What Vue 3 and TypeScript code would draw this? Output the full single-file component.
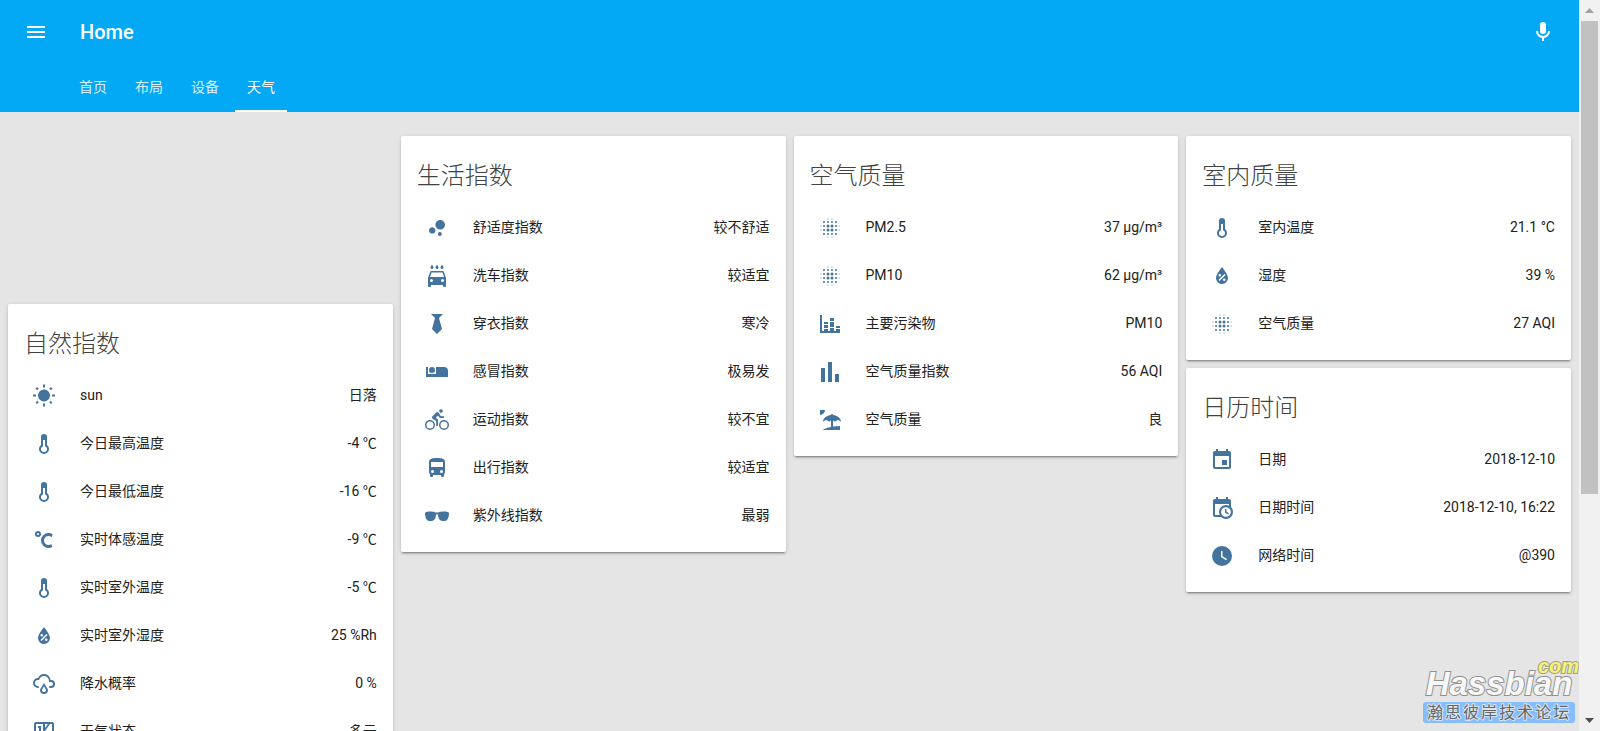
<script setup lang="ts">
import { ref } from 'vue'

interface Entity {
  icon: string
  name: string
  state: string
}

interface Card {
  title: string
  rows: Entity[]
}

const dot = (x: number, y: number, r: number): string =>
  `M${x - r},${y}a${r},${r} 0 1,0 ${2 * r},0a${r},${r} 0 1,0 ${-2 * r},0Z`

const blurPath = (): string => {
  const parts: string[] = []
  for (const x of [6, 10, 14, 18]) {
    for (const y of [6, 10, 14, 18]) {
      const inner = x > 6 && x < 18 && y > 6 && y < 18
      parts.push(dot(x, y, inner ? 1.5 : 1))
    }
  }
  for (const a of [3, 21]) {
    for (const b of [10, 14]) {
      parts.push(dot(a, b, 0.5), dot(b, a, 0.5))
    }
  }
  return parts.join('')
}

const icons: Record<string, string> = {
  sunny:
    'M3.55,18.54L4.96,19.95L6.76,18.16L5.34,16.74M11,22.45C11.32,22.45 13,22.45 13,22.45V19.5H11M12,5.5A6,6 0 0,0 6,11.5A6,6 0 0,0 12,17.5A6,6 0 0,0 18,11.5C18,8.18 15.31,5.5 12,5.5M20,12.5H23V10.5H20M17.24,18.16L19.04,19.95L20.45,18.54L18.66,16.74M20.45,4.46L19.04,3.05L17.24,4.84L18.66,6.26M13,0.55H11V3.5H13M4,10.5H1V12.5H4M6.76,4.84L4.96,3.05L3.55,4.46L5.34,6.26L6.76,4.84Z',
  thermometer:
    'M17,17A5,5 0 0,1 12,22A5,5 0 0,1 7,17C7,15.36 7.79,13.91 9,13V5A3,3 0 0,1 12,2A3,3 0 0,1 15,5V13C16.21,13.91 17,15.36 17,17M11,8V14.17C9.83,14.58 9,15.69 9,17A3,3 0 0,0 12,20A3,3 0 0,0 15,17C15,15.69 14.17,14.58 13,14.17V8H11Z',
  celsius:
    'M16.5,5C18.05,5 19.5,5.47 20.69,6.28L19.53,9.17C18.73,8.44 17.67,8 16.5,8C14,8 12,10 12,12.5C12,15 14,17 16.5,17C17.53,17 18.47,16.66 19.23,16.08L20.37,18.93C19.24,19.61 17.92,20 16.5,20A7.5,7.5 0 0,1 9,12.5A7.5,7.5 0 0,1 16.5,5M6,3A3,3 0 0,1 9,6A3,3 0 0,1 6,9A3,3 0 0,1 3,6A3,3 0 0,1 6,3M6,5A1,1 0 0,0 5,6A1,1 0 0,0 6,7A1,1 0 0,0 7,6A1,1 0 0,0 6,5Z',
  humidity:
    'M12,3.25C12,3.25 6,10 6,14C6,17.32 8.69,20 12,20A6,6 0 0,0 18,14C18,10 12,3.25 12,3.25M14.47,9.97L15.53,11.03L9.53,17.03L8.47,15.97M9.75,10A1.25,1.25 0 0,1 11,11.25A1.25,1.25 0 0,1 9.75,12.5A1.25,1.25 0 0,1 8.5,11.25A1.25,1.25 0 0,1 9.75,10M14.25,14.5A1.25,1.25 0 0,1 15.5,15.75A1.25,1.25 0 0,1 14.25,17A1.25,1.25 0 0,1 13,15.75A1.25,1.25 0 0,1 14.25,14.5Z',
  rainy:
    'M6,14A1,1 0 0,1 7,15A1,1 0 0,1 6,16A5,5 0 0,1 1,11A5,5 0 0,1 6,6C7,3.65 9.3,2 12,2C15.43,2 18.24,4.66 18.5,8.03L19,8A4,4 0 0,1 23,12A4,4 0 0,1 19,16H18A1,1 0 0,1 17,15A1,1 0 0,1 18,14H19A2,2 0 0,0 21,12A2,2 0 0,0 19,10H17V9A5,5 0 0,0 12,4C9.5,4 7.45,5.82 7.06,8.19C6.73,8.07 6.37,8 6,8A3,3 0 0,0 3,11A3,3 0 0,0 6,14M14.83,15.67C16.39,17.23 16.39,19.5 14.83,21.08C14.05,21.86 13,22 12,22C11,22 9.95,21.86 9.17,21.08C7.61,19.5 7.61,17.23 9.17,15.67L12,11L14.83,15.67M13.41,16.69L12,14.25L10.59,16.69C9.8,17.5 9.8,18.7 10.59,19.5C11,19.93 11.5,20 12,20C12.5,20 13,19.93 13.41,19.5C14.2,18.7 14.2,17.5 13.41,16.69Z',
  forecast:
    'M4,2H20A2,2 0 0,1 22,4V20A2,2 0 0,1 20,22H4A2,2 0 0,1 2,20V4A2,2 0 0,1 4,2M4,4V20H11V4H4M13,4V8L16,4H13M18,4L13,11V20H20V4H18M6,6H9V11H7V8H6V6Z',
  bubble:
    'M7.2,11.2C8.97,11.2 10.4,12.63 10.4,14.4C10.4,16.17 8.97,17.6 7.2,17.6C5.43,17.6 4,16.17 4,14.4C4,12.63 5.43,11.2 7.2,11.2M14.8,16A2,2 0 0,1 16.8,18A2,2 0 0,1 14.8,20A2,2 0 0,1 12.8,18A2,2 0 0,1 14.8,16M15.2,4A4.8,4.8 0 0,1 20,8.8C20,11.45 17.85,13.6 15.2,13.6A4.8,4.8 0 0,1 10.4,8.8C10.4,6.15 12.55,4 15.2,4Z',
  carWash:
    'M5,13L6.5,8.5H17.5L19,13M17.5,18A1.5,1.5 0 0,1 16,16.5A1.5,1.5 0 0,1 17.5,15A1.5,1.5 0 0,1 19,16.5A1.5,1.5 0 0,1 17.5,18M6.5,18A1.5,1.5 0 0,1 5,16.5A1.5,1.5 0 0,1 6.5,15A1.5,1.5 0 0,1 8,16.5A1.5,1.5 0 0,1 6.5,18M18.92,8C18.72,7.42 18.16,7 17.5,7H6.5C5.84,7 5.28,7.42 5.08,8L3,14V22A1,1 0 0,0 4,23H5A1,1 0 0,0 6,22V21H18V22A1,1 0 0,0 19,23H20A1,1 0 0,0 21,22V14M7,5C7.83,5 8.5,4.33 8.5,3.5C8.5,2.5 7,0.8 7,0.8C7,0.8 5.5,2.5 5.5,3.5C5.5,4.33 6.17,5 7,5M12,5C12.83,5 13.5,4.33 13.5,3.5C13.5,2.5 12,0.8 12,0.8C12,0.8 10.5,2.5 10.5,3.5C10.5,4.33 11.17,5 12,5M17,5C17.83,5 18.5,4.33 18.5,3.5C18.5,2.5 17,0.8 17,0.8C17,0.8 15.5,2.5 15.5,3.5C15.5,4.33 16.17,5 17,5Z',
  tie: 'M6,2L10,6L7,17L12,22L17,17L14,6L18,2Z',
  bed: 'M7,13A3,3 0 0,0 10,10A3,3 0 0,0 7,7A3,3 0 0,0 4,10A3,3 0 0,0 7,13M19,7H11V14H3V7H1V17H23V11A4,4 0 0,0 19,7Z',
  bike: 'M5,20.5A3.5,3.5 0 0,1 1.5,17A3.5,3.5 0 0,1 5,13.5A3.5,3.5 0 0,1 8.5,17A3.5,3.5 0 0,1 5,20.5M5,12A5,5 0 0,0 0,17A5,5 0 0,0 5,22A5,5 0 0,0 10,17A5,5 0 0,0 5,12M14.8,10H19V8.2H15.8L13.86,4.93C13.57,4.43 13,4.1 12.4,4.1C11.93,4.1 11.5,4.29 11.2,4.6L7.5,8.29C7.19,8.6 7,9 7,9.5C7,10.13 7.33,10.66 7.85,10.97L11.2,13V18H13V11.5L10.75,9.85L13.07,7.5M19,20.5A3.5,3.5 0 0,1 15.5,17A3.5,3.5 0 0,1 19,13.5A3.5,3.5 0 0,1 22.5,17A3.5,3.5 0 0,1 19,20.5M19,12A5,5 0 0,0 14,17A5,5 0 0,0 19,22A5,5 0 0,0 24,17A5,5 0 0,0 19,12M16,4.8C17,4.8 17.8,4 17.8,3C17.8,2 17,1.2 16,1.2C15,1.2 14.2,2 14.2,3C14.2,4 15,4.8 16,4.8Z',
  bus: 'M18,11H6V6H18M16.5,17A1.5,1.5 0 0,1 15,15.5A1.5,1.5 0 0,1 16.5,14A1.5,1.5 0 0,1 18,15.5A1.5,1.5 0 0,1 16.5,17M7.5,17A1.5,1.5 0 0,1 6,15.5A1.5,1.5 0 0,1 7.5,14A1.5,1.5 0 0,1 9,15.5A1.5,1.5 0 0,1 7.5,17M4,16C4,16.88 4.39,17.67 5,18.22V20A1,1 0 0,0 6,21H7A1,1 0 0,0 8,20V19H16V20A1,1 0 0,0 17,21H18A1,1 0 0,0 19,20V18.22C19.61,17.67 20,16.88 20,16V6C20,2.5 16.42,2 12,2C7.58,2 4,2.5 4,6V16Z',
  sunglasses:
    'M1.5,7.9C3.5,7.4 8,7.4 10,8.2C11.3,8.7 12.7,8.7 14,8.2C16,7.4 20.5,7.4 22.5,7.9C23.6,8.2 24,8.6 24,9.3C24,12 23.3,14.5 22,16C21,17.2 16.5,17.3 15,16C13.7,14.8 13.2,12.8 12.9,10.8C12.6,10.2 11.4,10.2 11.1,10.8C10.8,12.8 10.3,14.8 9,16C7.5,17.3 3,17.2 2,16C0.7,14.5 0,12 0,9.3C0,8.6 0.4,8.2 1.5,7.9Z',
  blur: blurPath(),
  stacked:
    'M22,21H2V3H4V19H6V17H10V19H12V16H16V19H18V17H22V21M18,14H22V16H18V14M12,6H16V9H12V6M16,15H12V10H16V15M6,10H10V12H6V10M10,16H6V13H10V16Z',
  poll: 'M3,22V8H7V22H3M10,22V2H14V22H10M17,22V14H21V22H17Z',
  beach:
    'M15,18.54C17.13,18.21 19.5,18 22,18V22H5C5,21.35 8.2,19.86 13,18.9V12.4C12.16,12.65 11.45,13.21 11,13.95C10.39,12.93 9.27,12.25 8,12.25C6.73,12.25 5.61,12.93 5,13.95C5.03,10.37 8.5,7.43 13,7.04V7A1,1 0 0,1 14,6A1,1 0 0,1 15,7V7.04C19.5,7.43 22.96,10.37 23,13.95C22.39,12.93 21.27,12.25 20,12.25C18.73,12.25 17.61,12.93 17,13.95C16.55,13.21 15.84,12.65 15,12.39V18.54M7,2A5,5 0 0,1 2,7V2H7Z',
  calendar:
    'M19,19H5V8H19M16,1V3H8V1H6V3H5C3.89,3 3,3.89 3,5V19A2,2 0 0,0 5,21H19A2,2 0 0,0 21,19V5C21,3.89 20.1,3 19,3H18V1M17,12H12V17H17V12Z',
  calendarClock:
    'M15,13H16.5V15.82L18.94,17.23L18.19,18.53L15,16.69V13M19,8H5V19H9.67C9.24,18.09 9,17.07 9,16A7,7 0 0,1 16,9C17.07,9 18.09,9.24 19,9.67V8M5,21C3.89,21 3,20.1 3,19V5C3,3.89 3.89,3 5,3H6V1H8V3H16V1H18V3H19A2,2 0 0,1 21,5V11.1C22.24,12.36 23,14.09 23,16A7,7 0 0,1 16,23C14.09,23 12.36,22.24 11.1,21H5M16,11.15A4.85,4.85 0 0,0 11.15,16C11.15,18.68 13.32,20.85 16,20.85A4.85,4.85 0 0,0 20.85,16C20.85,13.32 18.68,11.15 16,11.15Z',
  clock:
    'M12,2A10,10 0 0,0 2,12A10,10 0 0,0 12,22A10,10 0 0,0 22,12A10,10 0 0,0 12,2M16.2,16.2L11,13V7H12.5V12.2L17,14.9L16.2,16.2Z',
}

const tabs = ['首页', '布局', '设备', '天气']
const activeTab = ref('天气')

const columns: Card[][] = [
  [
    {
      title: '自然指数',
      rows: [
        { icon: 'sunny', name: 'sun', state: '日落' },
        { icon: 'thermometer', name: '今日最高温度', state: '-4 ℃' },
        { icon: 'thermometer', name: '今日最低温度', state: '-16 ℃' },
        { icon: 'celsius', name: '实时体感温度', state: '-9 ℃' },
        { icon: 'thermometer', name: '实时室外温度', state: '-5 ℃' },
        { icon: 'humidity', name: '实时室外湿度', state: '25 %Rh' },
        { icon: 'rainy', name: '降水概率', state: '0 %' },
        { icon: 'forecast', name: '天气状态', state: '多云' },
      ],
    },
  ],
  [
    {
      title: '生活指数',
      rows: [
        { icon: 'bubble', name: '舒适度指数', state: '较不舒适' },
        { icon: 'carWash', name: '洗车指数', state: '较适宜' },
        { icon: 'tie', name: '穿衣指数', state: '寒冷' },
        { icon: 'bed', name: '感冒指数', state: '极易发' },
        { icon: 'bike', name: '运动指数', state: '较不宜' },
        { icon: 'bus', name: '出行指数', state: '较适宜' },
        { icon: 'sunglasses', name: '紫外线指数', state: '最弱' },
      ],
    },
  ],
  [
    {
      title: '空气质量',
      rows: [
        { icon: 'blur', name: 'PM2.5', state: '37 µg/m³' },
        { icon: 'blur', name: 'PM10', state: '62 µg/m³' },
        { icon: 'stacked', name: '主要污染物', state: 'PM10' },
        { icon: 'poll', name: '空气质量指数', state: '56 AQI' },
        { icon: 'beach', name: '空气质量', state: '良' },
      ],
    },
  ],
  [
    {
      title: '室内质量',
      rows: [
        { icon: 'thermometer', name: '室内温度', state: '21.1 °C' },
        { icon: 'humidity', name: '湿度', state: '39 %' },
        { icon: 'blur', name: '空气质量', state: '27 AQI' },
      ],
    },
    {
      title: '日历时间',
      rows: [
        { icon: 'calendar', name: '日期', state: '2018-12-10' },
        { icon: 'calendarClock', name: '日期时间', state: '2018-12-10, 16:22' },
        { icon: 'clock', name: '网络时间', state: '@390' },
      ],
    },
  ],
]
</script>

<template>
  <div class="shell">
    <div class="page">
      <header class="header">
        <div class="toolbar">
          <button class="icon-button" type="button" aria-label="Menu">
            <svg viewBox="0 0 24 24"><path d="M3,6H21V8H3V6M3,11H21V13H3V11M3,16H21V18H3V16Z" /></svg>
          </button>
          <h1 class="heading">Home</h1>
          <button class="icon-button" type="button" aria-label="Voice">
            <svg viewBox="0 0 24 24">
              <path
                d="M12,2A3,3 0 0,1 15,5V11A3,3 0 0,1 12,14A3,3 0 0,1 9,11V5A3,3 0 0,1 12,2M19,11C19,14.53 16.39,17.44 13,17.93V21H11V17.93C7.61,17.44 5,14.53 5,11H7A5,5 0 0,0 12,16A5,5 0 0,0 17,11H19Z"
              />
            </svg>
          </button>
        </div>
        <nav class="tabs">
          <button
            v-for="tab in tabs"
            :key="tab"
            type="button"
            class="tab"
            :class="{ active: tab === activeTab }"
            @click="activeTab = tab"
          >
            {{ tab }}
          </button>
        </nav>
      </header>

      <main class="columns">
        <div v-for="(cards, index) in columns" :key="index" class="column">
          <section v-for="card in cards" :key="card.title" class="card">
            <h2 class="title">{{ card.title }}</h2>
            <div v-for="row in card.rows" :key="row.name" class="row">
              <span class="badge">
                <svg viewBox="0 0 24 24"><path :d="icons[row.icon]" /></svg>
              </span>
              <span class="name">{{ row.name }}</span>
              <span class="state">{{ row.state }}</span>
            </div>
          </section>
        </div>
      </main>

      <div class="watermark">
        <span class="domain">com</span>
        <span class="brand">Hassbian</span>
        <span class="forum">瀚思彼岸技术论坛</span>
      </div>
    </div>

    <div class="rail">
      <svg class="arrow up" viewBox="0 0 9 5"><path d="M4.5,0L9,5H0Z" /></svg>
      <div class="track"><div class="thumb"></div></div>
      <svg class="arrow" viewBox="0 0 9 5"><path d="M0,0H9L4.5,5Z" /></svg>
    </div>
  </div>
</template>

<style>
body {
  margin: 0;
}
</style>

<style scoped>
.shell {
  display: flex;
  height: 100vh;
  overflow: hidden;
  background: #e5e5e5;
  color: #212121;
  font-family: Roboto, 'Noto Sans CJK SC', sans-serif;
  font-size: 14px;
  line-height: 20px;
}

.page {
  position: relative;
  flex: 1;
  min-width: 0;
  overflow: hidden;
}

.header {
  background: #03a9f4;
  color: #fff;
}

.toolbar {
  display: flex;
  align-items: center;
  height: 64px;
  padding: 0 16px;
}

.icon-button {
  width: 40px;
  height: 40px;
  padding: 8px;
  border: 0;
  background: none;
  color: inherit;
}

svg {
  display: block;
  width: 24px;
  height: 24px;
  fill: currentColor;
}

.heading {
  flex: 1;
  margin: 0 0 0 24px;
  font-size: 20px;
  font-weight: 500;
  line-height: 28px;
}

.tabs {
  display: flex;
  gap: 4px;
  height: 48px;
  padding-left: 67px;
}

.tab {
  padding: 0 12px;
  border: 0;
  border-bottom: 2px solid transparent;
  background: none;
  color: rgba(255, 255, 255, 0.85);
  font: inherit;
}

.tab.active {
  border-bottom-color: #fff;
  color: #fff;
}

.columns {
  display: grid;
  grid-template-columns: repeat(4, minmax(0, 1fr));
  gap: 8px;
  align-items: start;
  padding: 24px 8px 8px;
}

.column {
  display: grid;
  gap: 8px;
}

.column:first-child {
  padding-top: 168px;
}

.card {
  padding: 20px 16px 12px;
  border-radius: 2px;
  background: #fff;
  box-shadow:
    0 2px 2px 0 rgba(0, 0, 0, 0.14),
    0 1px 5px 0 rgba(0, 0, 0, 0.12),
    0 3px 1px -2px rgba(0, 0, 0, 0.2);
}

.title {
  margin: 0 0 8px;
  color: #424242;
  font-size: 24px;
  font-weight: 300;
  line-height: 40px;
}

.row {
  display: flex;
  align-items: center;
  height: 48px;
}

.badge {
  padding: 8px;
  color: #44739e;
}

.name,
.state {
  margin-left: 16px;
  padding-bottom: 2px;
}

.name {
  flex: 1;
}

.watermark {
  position: absolute;
  right: 4px;
  bottom: 8px;
  display: grid;
  font-family: 'Liberation Sans', 'Noto Sans CJK SC', sans-serif;
}

.domain {
  justify-self: end;
  margin: 0 -4px -8px 0;
  color: #f7f17a;
  font-size: 20px;
  font-style: italic;
  font-weight: 700;
  line-height: 16px;
  -webkit-text-stroke: 2px #a0a080;
  paint-order: stroke fill;
}

.brand {
  color: #f8f8f8;
  font-size: 33px;
  font-style: italic;
  font-weight: 700;
  line-height: 36px;
  text-align: center;
  -webkit-text-stroke: 2px #909090;
  paint-order: stroke fill;
}

.forum {
  padding: 0 4px;
  border-radius: 3px;
  background: #85bdff;
  color: #666;
  font-size: 16px;
  line-height: 21px;
  letter-spacing: 2px;
  text-align: center;
  -webkit-text-stroke: 2px #d8e4f0;
  paint-order: stroke fill;
}

.rail {
  display: flex;
  flex-direction: column;
  align-items: center;
  width: 21px;
  background: #f1f1f1;
}

.arrow {
  width: 9px;
  height: 5px;
  margin: 8px 0;
  color: #505050;
}

.arrow.up {
  color: #a3a3a3;
}

.track {
  flex: 1;
  width: 17px;
}

.thumb {
  height: 68.6%;
  background: #c1c1c1;
}
</style>
